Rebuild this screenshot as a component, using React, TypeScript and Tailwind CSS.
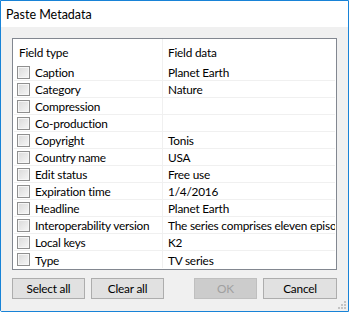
import React from 'react';

interface Row {
  field: string;
  value: string;
}

const ROWS: Row[] = [
  { field: 'Caption', value: 'Planet Earth' },
  { field: 'Category', value: 'Nature' },
  { field: 'Compression', value: '' },
  { field: 'Co-production', value: '' },
  { field: 'Copyright', value: 'Tonis' },
  { field: 'Country name', value: 'USA' },
  { field: 'Edit status', value: 'Free use' },
  { field: 'Expiration time', value: '1/4/2016' },
  { field: 'Headline', value: 'Planet Earth' },
  { field: 'Interoperability version', value: 'The series comprises eleven episodes' },
  { field: 'Local keys', value: 'K2' },
  { field: 'Type', value: 'TV series' },
];

function Check() {
  return (
    <span className="w-[13px] h-[13px] border border-[#8f8f8f] bg-[#f6f6f6] flex items-center justify-center shrink-0">
      <span className="w-[9px] h-[9px] bg-gradient-to-br from-[#dcdcdc] to-[#f4f4f4]" />
    </span>
  );
}

function Button({ label, disabled }: { label: string; disabled?: boolean }) {
  return (
    <button
      className={`h-[21px] border flex items-center justify-center pt-[1px] ${
        disabled ? 'bg-[#cccccc] border-[#bfbfbf] text-[#a0a0a0]' : 'bg-[#e1e1e1] border-[#adadad] text-black'
      }`}
    >
      {label}
    </button>
  );
}

export default function App() {
  return (
    <div
      className="w-[350px] h-[327px] bg-white text-[11.8px] tracking-[-0.2px] text-black"
      style={{ fontFamily: '"Segoe UI", Lato, sans-serif' }}
    >
      <div className="w-[349px] h-[312px] border border-[#1883d7] rounded-bl-[2px] flex flex-col">
        <div className="h-[26px] bg-white pl-[5px] pt-[6px] leading-[16px] text-[12.5px] tracking-[0px]">Paste Metadata</div>
        <div className="flex-1 bg-[#f0f0f0] flex flex-col px-[11px] pt-[11px] relative">
          <div className="h-[232px] border border-[#828790] bg-white flex flex-col">
            <div className="flex h-[25px] items-center">
              <div className="w-[150px] pl-[6px] border-r border-[#f0f0f0] h-full flex items-center pt-[2px]">Field type</div>
              <div className="pl-[5px] pt-[2px]">Field data</div>
            </div>
            {ROWS.map((r) => (
              <div key={r.field} className="flex h-[17px] border-b border-[#f0f0f0] last:border-b-0 mx-[1px]">
                <div className="w-[149px] flex items-center gap-[5px] pl-[3px] border-r border-[#f0f0f0]">
                  <Check />
                  <span className="whitespace-nowrap pt-[2px]">{r.field}</span>
                </div>
                <div className="flex-1 pl-[5px] pt-[2px] flex items-center overflow-hidden whitespace-nowrap">{r.value}</div>
              </div>
            ))}
          </div>
          <div className="flex mt-[8px] gap-[6px]">
            <div className="w-[73px] grid"><Button label="Select all" /></div>
            <div className="w-[73px] grid"><Button label="Clear all" /></div>
            <div className="flex-1" />
            <div className="w-[63px] grid"><Button label="OK" disabled /></div>
            <div className="w-[74px] grid"><Button label="Cancel" /></div>
          </div>
          <svg className="absolute right-[2px] bottom-[2px]" width="8" height="8" viewBox="0 0 8 8">
            <rect x="6" y="0" width="2" height="2" fill="#c4c4c4" />
            <rect x="3" y="3" width="2" height="2" fill="#c4c4c4" />
            <rect x="6" y="3" width="2" height="2" fill="#c4c4c4" />
            <rect x="0" y="6" width="2" height="2" fill="#c4c4c4" />
            <rect x="3" y="6" width="2" height="2" fill="#c4c4c4" />
            <rect x="6" y="6" width="2" height="2" fill="#c4c4c4" />
          </svg>
        </div>
      </div>
    </div>
  );
}
